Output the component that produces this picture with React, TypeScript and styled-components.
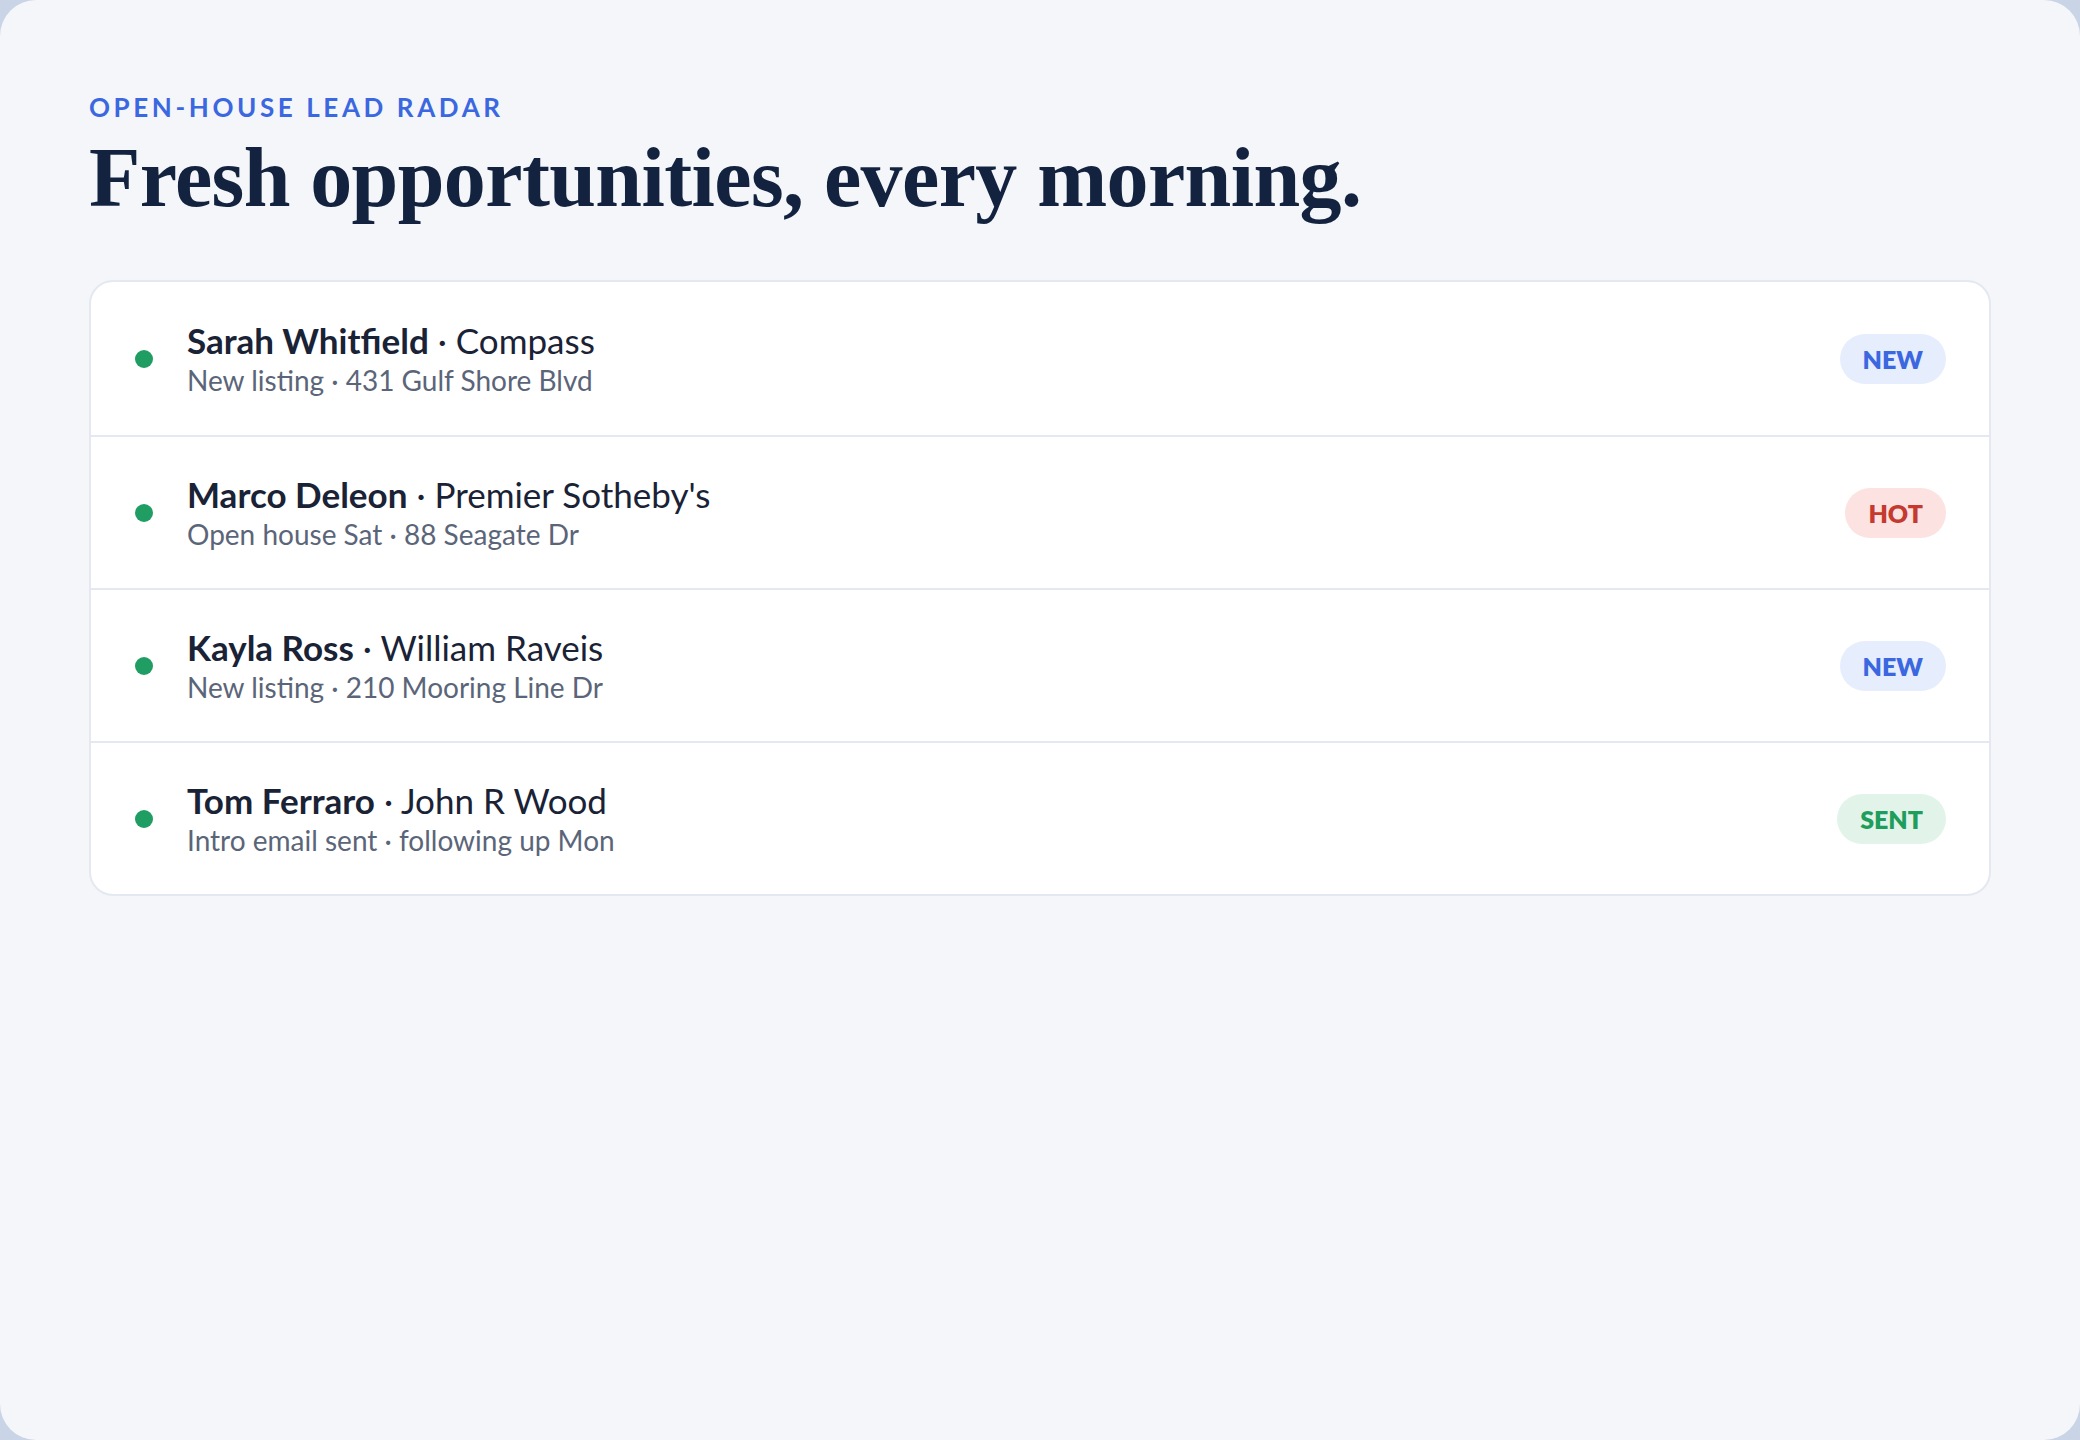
import React from "react";
import styled, { createGlobalStyle } from "styled-components";

const Global = createGlobalStyle`
  html, body { margin: 0; padding: 0; background: #c9d4e6; }
  * { box-sizing: border-box; }
`;

const Panel = styled.div`
  width: 2080px;
  height: 1440px;
  background: #f4f6fa;
  border-radius: 36px;
  padding: 92px 89px 0 89px;
  font-family: "Lato", "Liberation Sans", sans-serif;
`;

const Eyebrow = styled.div`
  color: #3b67e0;
  font-family: "Lato", sans-serif;
  font-weight: 700;
  font-size: 26px;
  letter-spacing: 3.6px;
  line-height: 30px;
`;

const Heading = styled.h1`
  margin: 8px 0 0 0;
  color: #13233f;
  font-family: "Liberation Serif", serif;
  font-weight: 700;
  font-size: 84px;
  line-height: 96px;
  letter-spacing: -0.6px;
`;

const Card = styled.div`
  margin-top: 54px;
  width: 1902px;
  background: #ffffff;
  border: 2px solid #e4e8f0;
  border-radius: 24px;
  overflow: hidden;
`;

const Row = styled.div`
  display: flex;
  align-items: center;
  height: 153px;
  padding: 0 43px 0 44px;
  & + & { border-top: 2px solid #e4e8f0; }
`;

const Dot = styled.span`
  width: 18px;
  height: 18px;
  border-radius: 50%;
  background: #1f9d62;
  flex: none;
`;

const Texts = styled.div`
  margin-left: 34px;
  display: flex;
  flex-direction: column;
  flex: 1;
`;

const Title = styled.div`
  color: #1a2236;
  font-size: 35px;
  line-height: 40px;
`;

const Name = styled.b`
  font-weight: 700;
`;

const Sub = styled.div`
  margin-top: 2px;
  color: #5b6579;
  font-size: 28px;
  line-height: 36px;
`;

const badgeColors: Record<string, { bg: string; fg: string }> = {
  NEW: { bg: "#e6edfd", fg: "#3b67e0" },
  HOT: { bg: "#fde2e2", fg: "#c43a2f" },
  SENT: { bg: "#e2f4ea", fg: "#1f9d5c" },
};

const Badge = styled.span<{ $kind: string }>`
  flex: none;
  padding: 10px 23px;
  border-radius: 999px;
  font-size: 25px;
  line-height: 30px;
  font-weight: 800;
  background: ${(p) => badgeColors[p.$kind].bg};
  color: ${(p) => badgeColors[p.$kind].fg};
`;

const leads = [
  { name: "Sarah Whitfield", org: "Compass", sub: "New listing · 431 Gulf Shore Blvd", badge: "NEW" },
  { name: "Marco Deleon", org: "Premier Sotheby's", sub: "Open house Sat · 88 Seagate Dr", badge: "HOT" },
  { name: "Kayla Ross", org: "William Raveis", sub: "New listing · 210 Mooring Line Dr", badge: "NEW" },
  { name: "Tom Ferraro", org: "John R Wood", sub: "Intro email sent · following up Mon", badge: "SENT" },
];

export default function App() {
  return (
    <>
      <Global />
      <Panel>
        <Eyebrow>OPEN-HOUSE LEAD RADAR</Eyebrow>
        <Heading>Fresh opportunities, every morning.</Heading>
        <Card>
          {leads.map((l) => (
            <Row key={l.name}>
              <Dot />
              <Texts>
                <Title>
                  <Name>{l.name}</Name> · {l.org}
                </Title>
                <Sub>{l.sub}</Sub>
              </Texts>
              <Badge $kind={l.badge}>{l.badge}</Badge>
            </Row>
          ))}
        </Card>
      </Panel>
    </>
  );
}
